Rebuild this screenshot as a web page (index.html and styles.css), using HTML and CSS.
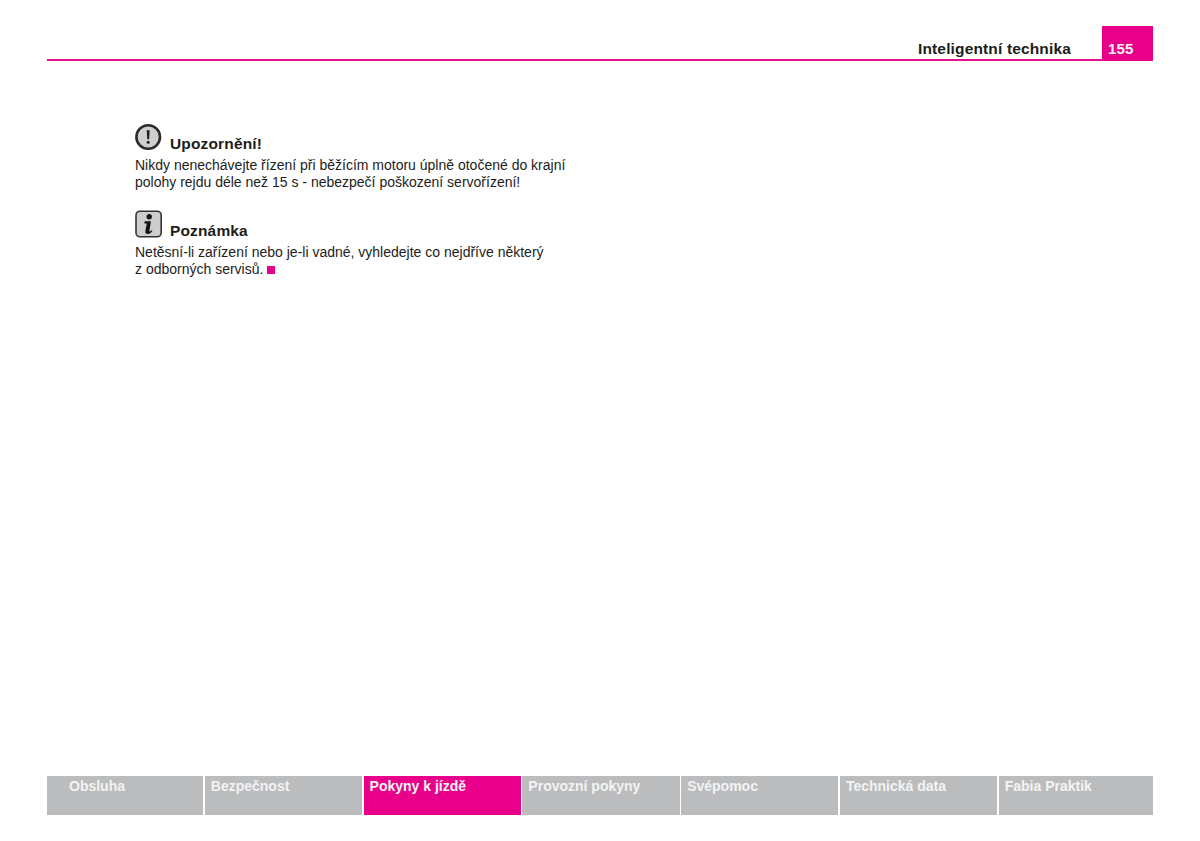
FILE: index.html
```html
<!DOCTYPE html>
<html lang="cs">
<head>
<meta charset="utf-8">
<title>Inteligentní technika</title>
<link rel="stylesheet" href="styles.css">
</head>
<body>
<div class="page">
  <header class="top">
    <h1 class="chapter">Inteligentní technika</h1>
    <div class="folio">155</div>
  </header>
  <main class="content">
    <section class="note warn">
      <div class="note-head">
        <svg class="icon-warn" width="28" height="28" viewBox="0 0 28 28" aria-hidden="true">
          <circle cx="13.2" cy="14" r="11.8" fill="#cfcfcf" stroke="#2b2b2b" stroke-width="2.6"/>
          <path d="M11.7 7.2h3l-.6 9h-1.8z" fill="#1d1d1d"/>
          <circle cx="13.2" cy="19.2" r="1.5" fill="#1d1d1d"/>
        </svg>
        <h2 class="note-title">Upozornění!</h2>
      </div>
      <p class="note-text">Nikdy nenechávejte řízení při běžícím motoru úplně otočené do krajní<br>polohy rejdu déle než 15 s - nebezpečí poškození servořízení!</p>
    </section>
    <section class="note info">
      <div class="note-head">
        <svg class="icon-info" width="28" height="28" viewBox="0 0 28 28" aria-hidden="true">
          <rect x="1" y="1.2" width="25.2" height="25.6" rx="4" fill="#cdcdcd" stroke="#333" stroke-width="1.6"/>
          <circle cx="14.2" cy="6.8" r="2.7" fill="#151515"/>
          <path d="M9.6 11.2h6.4l-1.6 9.6c-.1.8.5 1 1 .5l1.2-1.1.8.8c-1.3 1.9-2.8 2.9-4.6 2.9-2 0-2.7-1.3-2.4-3l1.3-7.4H9.4z" fill="#151515"/>
        </svg>
        <h2 class="note-title">Poznámka</h2>
      </div>
      <p class="note-text">Netěsní-li zařízení nebo je-li vadné, vyhledejte co nejdříve některý<br>z odborných servisů. <span class="end-mark"></span></p>
    </section>
  </main>
  <nav class="tabs">
    <a class="tab first">Obsluha</a>
    <a class="tab">Bezpečnost</a>
    <a class="tab active">Pokyny k jízdě</a>
    <a class="tab">Provozní pokyny</a>
    <a class="tab">Svépomoc</a>
    <a class="tab">Technická data</a>
    <a class="tab">Fabia Praktik</a>
  </nav>
</div>
</body>
</html>
```
FILE: styles.css
```css
* { box-sizing: border-box; }
html, body { margin: 0; height: 100%; background: #fff; }
body { font-family: "Liberation Sans", Arial, sans-serif; color: #1d1d1b; }
.page { width: 1200px; height: 841px; padding: 26px 47px 26px; display: flex; flex-direction: column; }
.top { height: 35px; display: flex; justify-content: flex-end; align-items: flex-end; border-bottom: 2px solid #e6108c; gap: 31px; flex: none; }
.chapter { margin: 0 0 2px; font-size: 15.5px; line-height: 17px; font-weight: 700; letter-spacing: .15px; }
.folio { width: 51px; height: 35px; margin-bottom: -2px; background: #e9008a; color: #f4f4f4; font-weight: 700; font-size: 15px; line-height: 17px; padding: 14px 0 0 6px; letter-spacing: .1px; }
.content { flex: 1; padding: 60px 0 0 88px; }
.note { margin-bottom: 16.4px; }
.note-head { display: flex; align-items: flex-end; gap: 7px; height: 30px; }
.note-head svg { flex: none; }
.note-title { margin: 0 0 -1px; font-size: 15.5px; line-height: 17px; font-weight: 700; letter-spacing: .15px; }
.note-text { margin: 5.6px 0 0; font-size: 14px; line-height: 17.5px; }
.end-mark { display: inline-block; width: 8px; height: 8px; background: #e9008a; }
.tabs { height: 39px; display: grid; grid-template-columns: 157fr 158fr 158fr 158fr 158fr 158fr 155fr; column-gap: 1.5px; flex: none; }
.tab { background: #bbbcbe; color: #f3f3f3; font-size: 14px; font-weight: 700; line-height: 17px; padding: 2px 0 0 6px; }
.tab.first { padding-left: 22px; }
.tab.active { background: #e9008a; }
```
